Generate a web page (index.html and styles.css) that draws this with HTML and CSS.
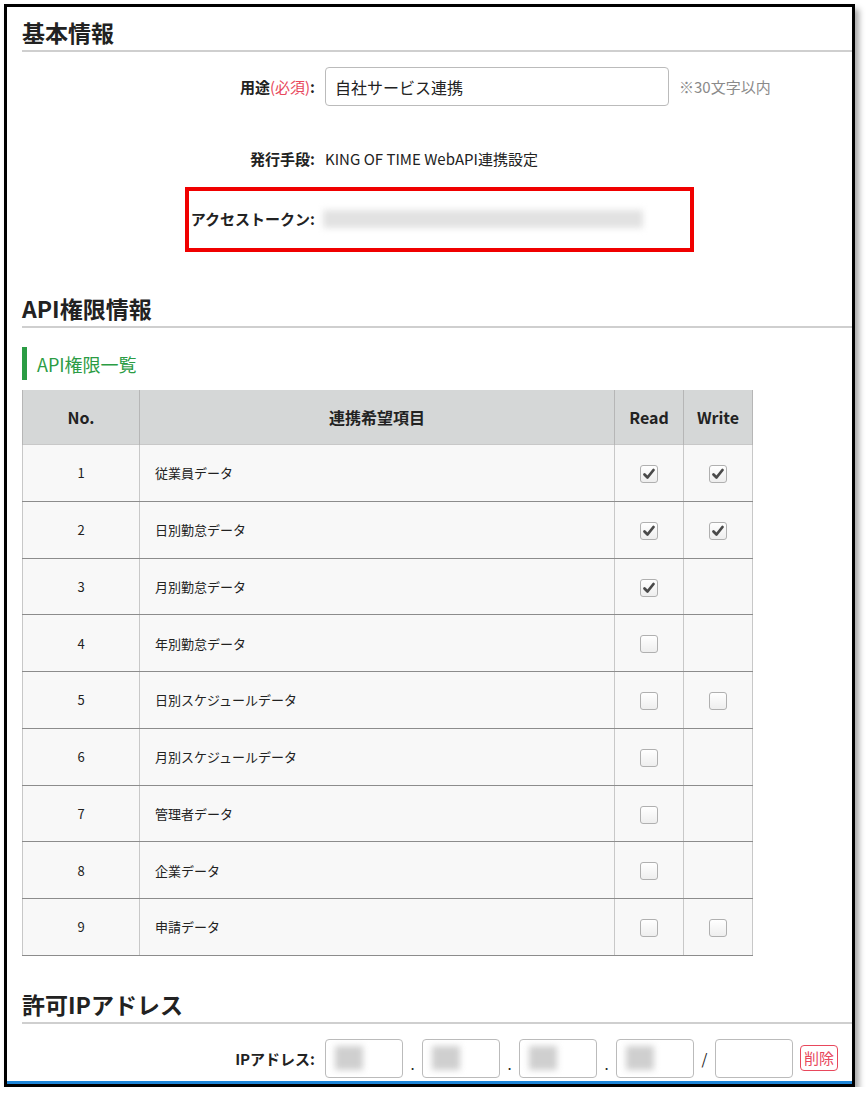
FILE: index.html
```html
<!DOCTYPE html>
<html lang="ja">

<head>
  <meta charset="UTF-8" />
  <meta name="viewport" content="width=device-width, initial-scale=1.0" />
  <title>API連携設定</title>
  <link rel="stylesheet" href="styles.css">
</head>

<body>
  <div class="frame">
    <h2 class="section-title">基本情報</h2>

    <div class="form-row row-use">
      <span class="form-label">用途<span class="req">(必須)</span>:</span>
      <div class="form-value">
        <input class="text-input" type="text" value="自社サービス連携">
        <span class="hint">※30文字以内</span>
      </div>
    </div>

    <div class="form-row row-issuer">
      <span class="form-label">発行手段:</span>
      <div class="form-value">KING OF TIME WebAPI連携設定</div>
    </div>

    <div class="form-row row-token">
      <span class="form-label">アクセストークン:</span>
      <div class="form-value"><span class="blur token-blur"></span></div>
      <div class="mark-box"></div>
    </div>

    <h2 class="section-title api-title">API権限情報</h2>

    <h3 class="sub-title">API権限一覧</h3>

    <table class="perm-table">
      <thead>
        <tr>
          <th class="col-no">No.</th>
          <th class="col-name">連携希望項目</th>
          <th class="col-check">Read</th>
          <th class="col-check">Write</th>
        </tr>
      </thead>
      <tbody id="perm-body"></tbody>
    </table>

    <h2 class="section-title ip-title">許可IPアドレス</h2>

    <div class="form-row row-ip">
      <span class="form-label">IPアドレス:</span>
      <div class="form-value ip-fields">
        <span class="ip-input"><span class="blur ip-blur"></span></span>
        <span class="ip-sep">.</span>
        <span class="ip-input"><span class="blur ip-blur"></span></span>
        <span class="ip-sep">.</span>
        <span class="ip-input"><span class="blur ip-blur"></span></span>
        <span class="ip-sep">.</span>
        <span class="ip-input"><span class="blur ip-blur"></span></span>
        <span class="ip-sep slash">/</span>
        <span class="ip-input"></span>
        <button class="btn-delete" type="button">削除</button>
      </div>
    </div>

    <div class="footer-bar"></div>
  </div>

  <script>
    // [項目名, read, write]  null = 列なし
    const perms = [
      ["従業員データ", true, true],
      ["日別勤怠データ", true, true],
      ["月別勤怠データ", true, null],
      ["年別勤怠データ", false, null],
      ["日別スケジュールデータ", false, false],
      ["月別スケジュールデータ", false, null],
      ["管理者データ", false, null],
      ["企業データ", false, null],
      ["申請データ", false, false],
    ];
    const tick = `<svg viewBox="0 0 18 18" width="18" height="18"><path d="M4.5 9.5 L7.5 12.5 L13.5 5" fill="none" stroke="#4a4a4a" stroke-width="2.8" stroke-linecap="round" stroke-linejoin="round"/></svg>`;
    const box = (v) => {
      if (v === null) return "";
      return `<span class="check${v ? " on" : ""}">${v ? tick : ""}</span>`;
    };
    let rows = "";
    perms.forEach((p, i) => {
      rows += `<tr>
        <td class="col-no">${i + 1}</td>
        <td class="col-name">${p[0]}</td>
        <td class="col-check">${box(p[1])}</td>
        <td class="col-check">${box(p[2])}</td>
      </tr>`;
    });
    document.getElementById("perm-body").innerHTML = rows;
  </script>
</body>

</html>
```

FILE: styles.css
```css
:root {
  --font: #222222;
  --line: #cfcfcf;
  --green: #2b9c44;
  --red: #e8485c;
  --mark: #f00000;
}

html,
body {
  margin: 0;
  padding: 0;
  background-color: #ffffff;
}

body {
  font-family: "Noto Sans CJK JP", "Noto Sans", sans-serif;
  color: var(--font);
}

.frame {
  margin: 4px 0 0 4px;
  width: 851px;
  height: 1083px;
  box-sizing: border-box;
  border: 3px solid #000000;
  padding-left: 15px;
  overflow: hidden;
  background-color: #ffffff;
  box-shadow: 4px 5px 6px rgba(0, 0, 0, 0.35);
}

.section-title {
  margin: 10px 0 0;
  padding-bottom: 3px;
  font-size: 23px;
  line-height: 30px;
  font-weight: bold;
  border-bottom: 2px solid var(--line);
}

.api-title {
  margin-top: 55px;
}

.ip-title {
  margin-top: 33px;
}

/* form rows */
.form-row {
  display: grid;
  grid-template-columns: 293px auto;
  column-gap: 10px;
  align-items: center;
  height: 39px;
  position: relative;
}

.form-label {
  text-align: right;
  font-size: 15px;
  font-weight: bold;
}

.form-value {
  display: flex;
  align-items: center;
  font-size: 15px;
}

.req {
  color: var(--red);
  font-weight: normal;
}

.row-use {
  margin-top: 15px;
}

.row-issuer {
  margin-top: 33px;
}

.row-token {
  margin-top: 21px;
}

.text-input {
  width: 344px;
  height: 39px;
  box-sizing: border-box;
  border: 1px solid #bbbbbb;
  border-radius: 4px;
  padding: 0 9px;
  font-family: inherit;
  font-size: 16px;
  color: var(--font);
  background-color: #ffffff;
}

.hint {
  margin-left: 10px;
  color: #8a8a8a;
  font-size: 15px;
}

.blur {
  display: inline-block;
  background-color: #d6d6d6;
  filter: blur(3px);
}

.token-blur {
  width: 320px;
  height: 18px;
  margin-left: -2px;
  background-color: #e2e2e2;
}

.mark-box {
  position: absolute;
  left: 163px;
  top: -12px;
  width: 509px;
  height: 65px;
  box-sizing: border-box;
  border: 4px solid var(--mark);
}

/* API権限一覧 */
.sub-title {
  margin: 19px 0 0;
  height: 33px;
  display: flex;
  align-items: center;
  border-left: 5px solid var(--green);
  padding-left: 10px;
  color: var(--green);
  font-size: 18px;
  font-weight: normal;
}

.perm-table {
  margin-top: 10px;
  width: 730px;
  border-collapse: collapse;
  table-layout: fixed;
}

.perm-table th {
  height: 54px;
  padding: 0;
  background-color: #d5d7d7;
  font-size: 16px;
  font-weight: bold;
  border-left: 1px solid #b6b6b6;
  border-right: 1px solid #b6b6b6;
}

.perm-table td {
  height: 55.75px;
  padding: 0;
  background-color: #f8f8f8;
  font-size: 13px;
  border: 1px solid #c8c8c8;
  border-bottom: 1px solid #8c8c8c;
}

.perm-table th.col-no {
  width: 116px;
}

.perm-table th.col-name {
  width: 474px;
}

.perm-table th.col-check {
  width: 68px;
}

td.col-no {
  text-align: center;
}

td.col-name {
  padding-left: 15px;
}

td.col-check {
  text-align: center;
}

.check {
  display: inline-flex;
  width: 18px;
  height: 18px;
  box-sizing: border-box;
  border: 1.5px solid #b0b0b0;
  border-radius: 3px;
  background: linear-gradient(#ffffff, #eeeeee);
  vertical-align: middle;
  align-items: center;
  justify-content: center;
}

.check svg {
  flex-shrink: 0;
}

/* 許可IPアドレス */
.row-ip {
  margin-top: 15px;
}

.ip-input {
  display: flex;
  align-items: center;
  width: 78px;
  height: 39px;
  box-sizing: border-box;
  border: 1px solid #bbbbbb;
  border-radius: 4px;
  padding-left: 9px;
}

.ip-blur {
  width: 28px;
  height: 24px;
  background-color: #cfcfcf;
}

.ip-sep {
  width: 19px;
  text-align: center;
  font-size: 15px;
  padding-top: 10px;
}

.ip-sep.slash {
  width: 21px;
  padding-top: 0;
}

.btn-delete {
  margin-left: 7px;
  height: 26px;
  padding: 0 3px;
  border: 1px solid var(--red);
  border-radius: 4px;
  background-color: #ffffff;
  color: var(--red);
  font-family: inherit;
  font-size: 15px;
  line-height: 22px;
}

.footer-bar {
  margin-top: 3px;
  margin-left: -15px;
  border-top: 3px solid #1f86d8;
  height: 10px;
}
```
